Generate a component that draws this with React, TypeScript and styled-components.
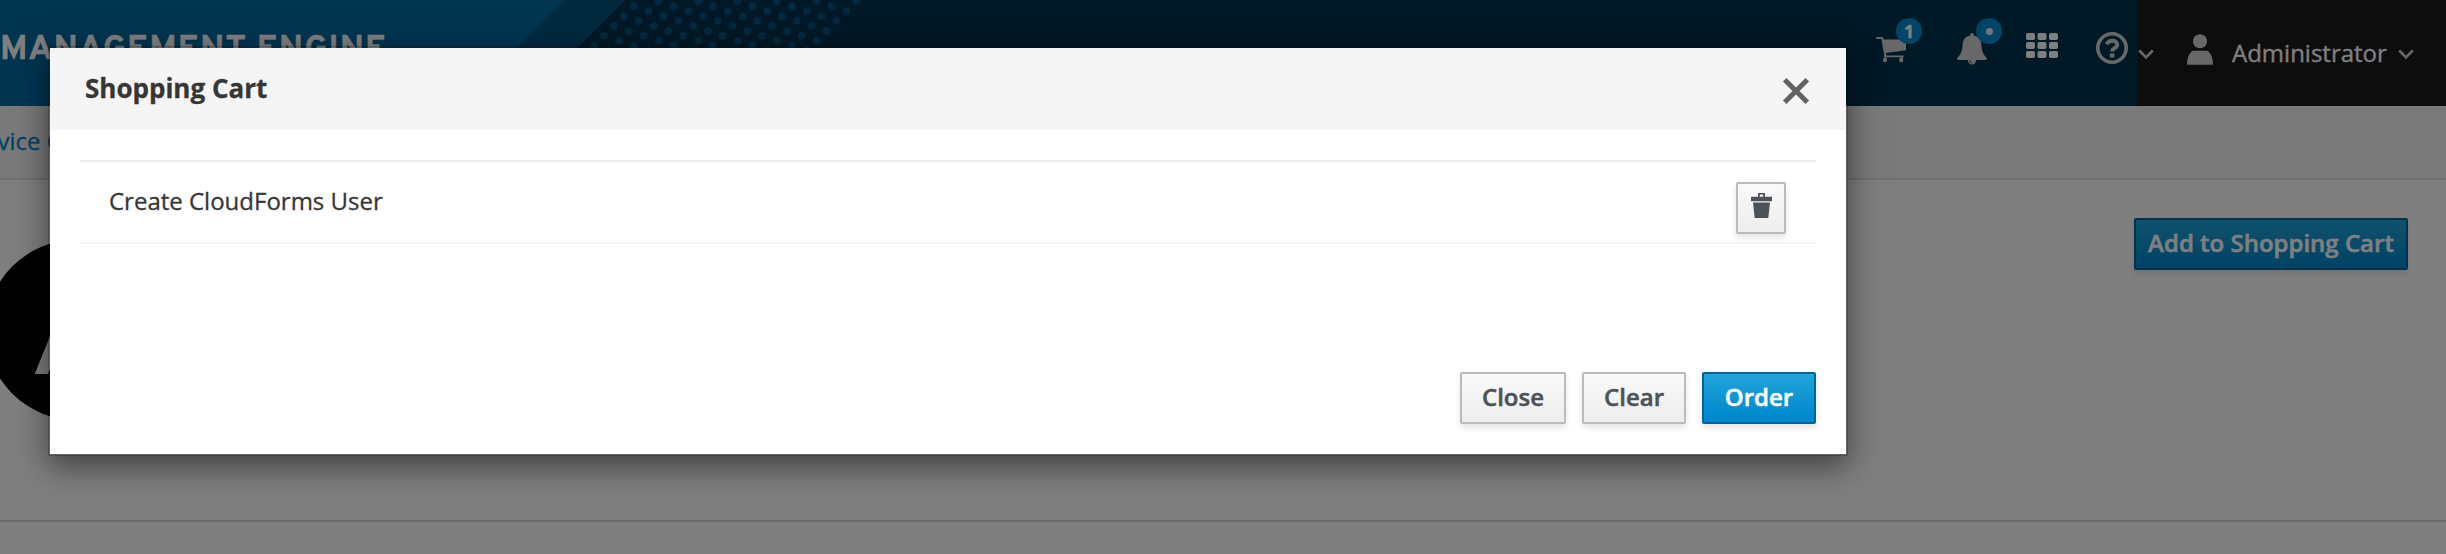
import React from 'react';
import styled, { createGlobalStyle, css } from 'styled-components';

const GlobalStyle = createGlobalStyle`
  *, *::before, *::after { box-sizing: border-box; }
  html, body { margin: 0; padding: 0; background: #fff; overflow: hidden; }
  body { font-family: "Open Sans", Helvetica, Arial, sans-serif; font-size: 24px; line-height: 40px; color: #363636; -webkit-text-stroke: 0.3px currentColor; }
`;

const Page = styled.div`
  position: relative;
  height: 554px;
  overflow: hidden;
  display: flex;
  flex-direction: column;
  background: #fff;
`;

const Navbar = styled.header`
  position: relative;
  height: 106px;
  flex: none;
  display: flex;
  justify-content: space-between;
  background: #00324c;
  color: #fff;
`;

const NavArt = styled.svg`
  position: absolute;
  inset: 0 auto auto 0;
`;

const Brand = styled.div`
  position: relative;
  padding: 26px 0 0 0;
  font-family: "Overpass", "Roboto", sans-serif;
  font-size: 34px;
  line-height: 42px;
  font-weight: 700;
  letter-spacing: 1.1px;
  padding-top: 30px;
  white-space: nowrap;
`;

const Utilities = styled.nav`
  position: relative;
  display: flex;
  align-items: flex-start;
`;

const NavIcon = styled.span<{ $top: number; $gap: number; $color?: string }>`
  position: relative;
  display: block;
  margin-top: ${(p) => p.$top}px;
  margin-right: ${(p) => p.$gap}px;
  color: ${(p) => p.$color ?? '#d1d1d1'};
  svg { display: block; }
`;

const Badge = styled.span<{ $left: number; $top: number }>`
  position: absolute;
  left: ${(p) => p.$left}px;
  top: ${(p) => p.$top}px;
  width: 26px;
  height: 26px;
  border-radius: 13px;
  background: #0088ce;
  color: #fff;
  font-size: 18px;
  font-weight: 700;
  line-height: 26px;
  text-align: center;
`;

const BadgeDot = styled.i`
  display: block;
  width: 7px;
  height: 7px;
  margin: 10px auto 0;
  border-radius: 50%;
  background: #e8e8e8;
`;

const UserArea = styled.div`
  width: 308px;
  height: 106px;
  display: flex;
  align-items: flex-start;
  background: #1a1a1a;
`;

const UserName = styled.span`
  width: 166px;
  margin-top: 33px;
  color: #fff;
  white-space: nowrap;
`;

const Breadcrumb = styled.div`
  flex: none;
  height: 74px;
  padding-top: 15px;
  background: #f5f5f5;
  border-bottom: 2px solid #e0e0e0;
`;

const Crumb = styled.a`
  display: block;
  margin-left: -39px;
  color: #0088ce;
  white-space: nowrap;
`;

const Detail = styled.main`
  flex: none;
  height: 342px;
  display: flex;
  justify-content: space-between;
  align-items: flex-start;
  padding: 38px 38px 0 0;
  border-bottom: 2px solid #dbdbdb;
`;

const ServiceLogo = styled.svg`
  display: block;
  margin: 22px 0 0 -14px;
`;

const Button = styled.button<{ $primary?: boolean }>`
  height: 52px;
  padding: 0 0 3px;
  display: flex;
  align-items: center;
  justify-content: center;
  font: 600 24px/40px "Open Sans", sans-serif;
  -webkit-text-stroke: 0.5px currentColor;
  white-space: nowrap;
  border-radius: 2px;
  box-shadow: 0 4px 6px rgba(3, 3, 3, 0.1);
  ${(p) =>
    p.$primary
      ? css`
          color: #fff;
          border: 2px solid #00659c;
          background: #0088ce linear-gradient(to bottom, #21a5da 0%, #0088ce 90%);
        `
      : css`
          color: #4d5258;
          border: 2px solid #bbb;
          background: #f1f1f1 linear-gradient(to bottom, #fafafa 0%, #ededed 100%);
        `}
`;

const AddButton = styled(Button)`
  width: 274px;
`;

const Backdrop = styled.div`
  position: absolute;
  inset: 0;
  padding: 46px 0 0 48px;
  background: rgba(0, 0, 0, 0.5);
`;

const Dialog = styled.section`
  width: 1800px;
  height: 410px;
  display: flex;
  flex-direction: column;
  border: 2px solid rgba(0, 0, 0, 0.2);
  background: #fff;
  background-clip: padding-box;
  box-shadow: 0 10px 30px rgba(0, 0, 0, 0.5);
`;

const DialogHeader = styled.header`
  height: 82px;
  flex: none;
  display: flex;
  align-items: flex-start;
  justify-content: space-between;
  padding: 20px 36px 0 35px;
  background: #f5f5f5;
`;

const DialogTitle = styled.h4`
  margin: 0;
  font-size: 26px;
  line-height: 40px;
  font-weight: 700;
`;

const CloseIcon = styled.button`
  margin: 9px 0 0;
  padding: 0;
  border: 0;
  background: none;
  svg { display: block; }
`;

const DialogBody = styled.div`
  flex: 1;
  padding: 30px 30px 0;
`;

const CartRow = styled.div`
  height: 84px;
  display: flex;
  justify-content: space-between;
  align-items: flex-start;
  padding: 20px 30px 0 29px;
  border-top: 2px solid #ededed;
  border-bottom: 2px solid #f5f5f5;
`;

const ItemName = styled.span`
  margin-top: -1px;
  white-space: nowrap;
`;

const TrashButton = styled(Button)`
  width: 50px;
  padding-bottom: 5px;
`;

const DialogFooter = styled.footer`
  flex: none;
  display: flex;
  justify-content: flex-end;
  gap: 16px;
  padding: 0 30px 30px;
`;

const FooterButton = styled(Button)<{ $w: number }>`
  width: ${(p) => p.$w}px;
`;

/* Halftone lattice: twelve slanted columns that follow the 45° stripes. */
const dots = Array.from({ length: 12 }, (_, i) =>
  Array.from({ length: 22 }, (_, k) => {
    const j = k - 7;
    return { x: 633.7 + 14.84 * i - 9.87 * j, y: 6.3 + 4.93 * i + 9.87 * j };
  }),
)
  .flat()
  .filter((d) => d.y > -4 && d.y < 110);

const Chevron = () => (
  <svg width="16" height="11" viewBox="0 0 16 11" fill="none" stroke="currentColor" strokeWidth="2.6">
    <path d="M1.2 1.5 8 8.3l6.8-6.8" />
  </svg>
);

export default function App() {
  return (
    <>
      <GlobalStyle />
      <Page>
        <Navbar>
          <NavArt width="900" height="106" aria-hidden>
            <path d="M0 0H625.5L519.500 106H0Z" fill="#00527d" />
            <path d="M0 0H565L459 106H0Z" fill="#006aa0" />
            {dots.map((d, n) => (
              <circle key={n} cx={d.x} cy={d.y} r="3.8" fill="#005483" />
            ))}
          </NavArt>
          <Brand>MANAGEMENT ENGINE</Brand>
          <Utilities>
            <NavIcon $top={37} $gap={51}>
              <svg width="30" height="26" viewBox="0 0 30 26" fill="currentColor">
                <path d="M1 0h5.600l1 2.600H30v10.600L10 16l.3 2.500H27.500v1.800H8.600L5.400 2H1a1 1 0 0 1 0-2Z" />
                <path d="M8.500 18h1.800v4H8.500zM25 19.500h1.800v3H25z" />
                <circle cx="9" cy="23" r="2.200" />
                <circle cx="25.200" cy="23" r="2.200" />
              </svg>
              <Badge $left={20} $top={-19}>1</Badge>
            </NavIcon>
            <NavIcon $top={33} $gap={39}>
              <svg width="30" height="32" viewBox="0 0 30 32" fill="currentColor">
                <path d="M15 0c1 0 1.700.7 1.700 1.800v.8c4.600.8 7.300 4 7.600 8.400.4 6.500 1.500 10.200 5.200 13.700.9 1 .4 2.300-.9 2.300H1.400C.1 27-.4 25.700.5 24.700 4.200 21.200 5.300 17.500 5.700 11c.3-4.400 3-7.600 7.600-8.400v-.8C13.300.7 14 0 15 0Z" />
                <path d="M10.800 27h8.400a4.200 4.600 0 0 1-8.400 0Z" />
                <path d="M12.600 27.300c.2 1.500 1.200 2.400 2.600 2.500" fill="none" stroke="#00324c" strokeWidth=".9" />
              </svg>
              <Badge $left={19} $top={-15}>
                <BadgeDot />
              </Badge>
            </NavIcon>
            <NavIcon $top={33} $gap={38} $color="#fff">
              <svg width="32" height="25" viewBox="0 0 32 25" fill="currentColor">
                {[0, 11.5, 23].map((x) =>
                  [0, 9, 18].map((y) => <rect key={`${x}-${y}`} x={x} y={y} width="9" height="7" rx="1.800" />),
                )}
              </svg>
            </NavIcon>
            <NavIcon $top={32} $gap={10}>
              <svg width="32" height="32" viewBox="0 0 32 32" fill="none" stroke="currentColor">
                <circle cx="16" cy="16" r="14.200" strokeWidth="3.600" />
                <path d="M10.800 12.300c1-2.300 2.700-3.500 5.400-3.500 3 0 5 1.500 5 3.900 0 3.700-5 3.200-5 6.800" strokeWidth="4" />
                <path d="M13.800 23.500h4.600" strokeWidth="4" />
              </svg>
            </NavIcon>
            <UserArea>
              <NavIcon $top={49} $gap={33}>
                <Chevron />
              </NavIcon>
              <NavIcon $top={34} $gap={19}>
                <svg width="26" height="31" viewBox="0 0 26 31" fill="currentColor">
                  <circle cx="13" cy="7.300" r="7" />
                  <path d="M6.500 16.700h13c3.400 0 6.500 6.500 6.500 14H0c0-7.500 3.100-14 6.500-14Z" />
                </svg>
              </NavIcon>
              <UserName>Administrator</UserName>
              <NavIcon $top={49} $gap={0}>
                <Chevron />
              </NavIcon>
            </UserArea>
          </Utilities>
        </Navbar>
        <Breadcrumb>
          <Crumb>Service Catalogs</Crumb>
        </Breadcrumb>
        <Detail>
          <ServiceLogo width="180" height="180" viewBox="0 0 180 180">
            <circle cx="90" cy="90" r="90" fill="#000" />
            <path d="M48.700 134 82 52c1.600-4 8-4 9.700 0L125 134l-12 0-26-60-25 60Z" fill="#fff" />
          </ServiceLogo>
          <AddButton $primary>Add to Shopping Cart</AddButton>
        </Detail>
        <Backdrop>
          <Dialog role="dialog">
            <DialogHeader>
              <DialogTitle>Shopping Cart</DialogTitle>
              <CloseIcon aria-label="Close">
                <svg width="28" height="28" viewBox="0 0 28 28" stroke="#626262" strokeWidth="5" strokeLinecap="butt">
                  <path d="M2.700 2.700 25.300 25.300M25.300 2.700 2.700 25.300" />
                </svg>
              </CloseIcon>
            </DialogHeader>
            <DialogBody>
              <CartRow>
                <ItemName>Create CloudForms User</ItemName>
                <TrashButton aria-label="Remove">
                  <svg width="21" height="25" viewBox="0 0 21 25" fill="#4d5258">
                    <path d="M7 3.700V0h7v3.700H21V8.300H0V3.700Zm1.800 0h3.400V1.600H8.800Z" fillRule="evenodd" />
                    <path d="M2 9.600h17l-1.700 15.400H3.700Z" />
                  </svg>
                </TrashButton>
              </CartRow>
            </DialogBody>
            <DialogFooter>
              <FooterButton $w={106}>Close</FooterButton>
              <FooterButton $w={104}>Clear</FooterButton>
              <FooterButton $w={114} $primary>Order</FooterButton>
            </DialogFooter>
          </Dialog>
        </Backdrop>
      </Page>
    </>
  );
}
